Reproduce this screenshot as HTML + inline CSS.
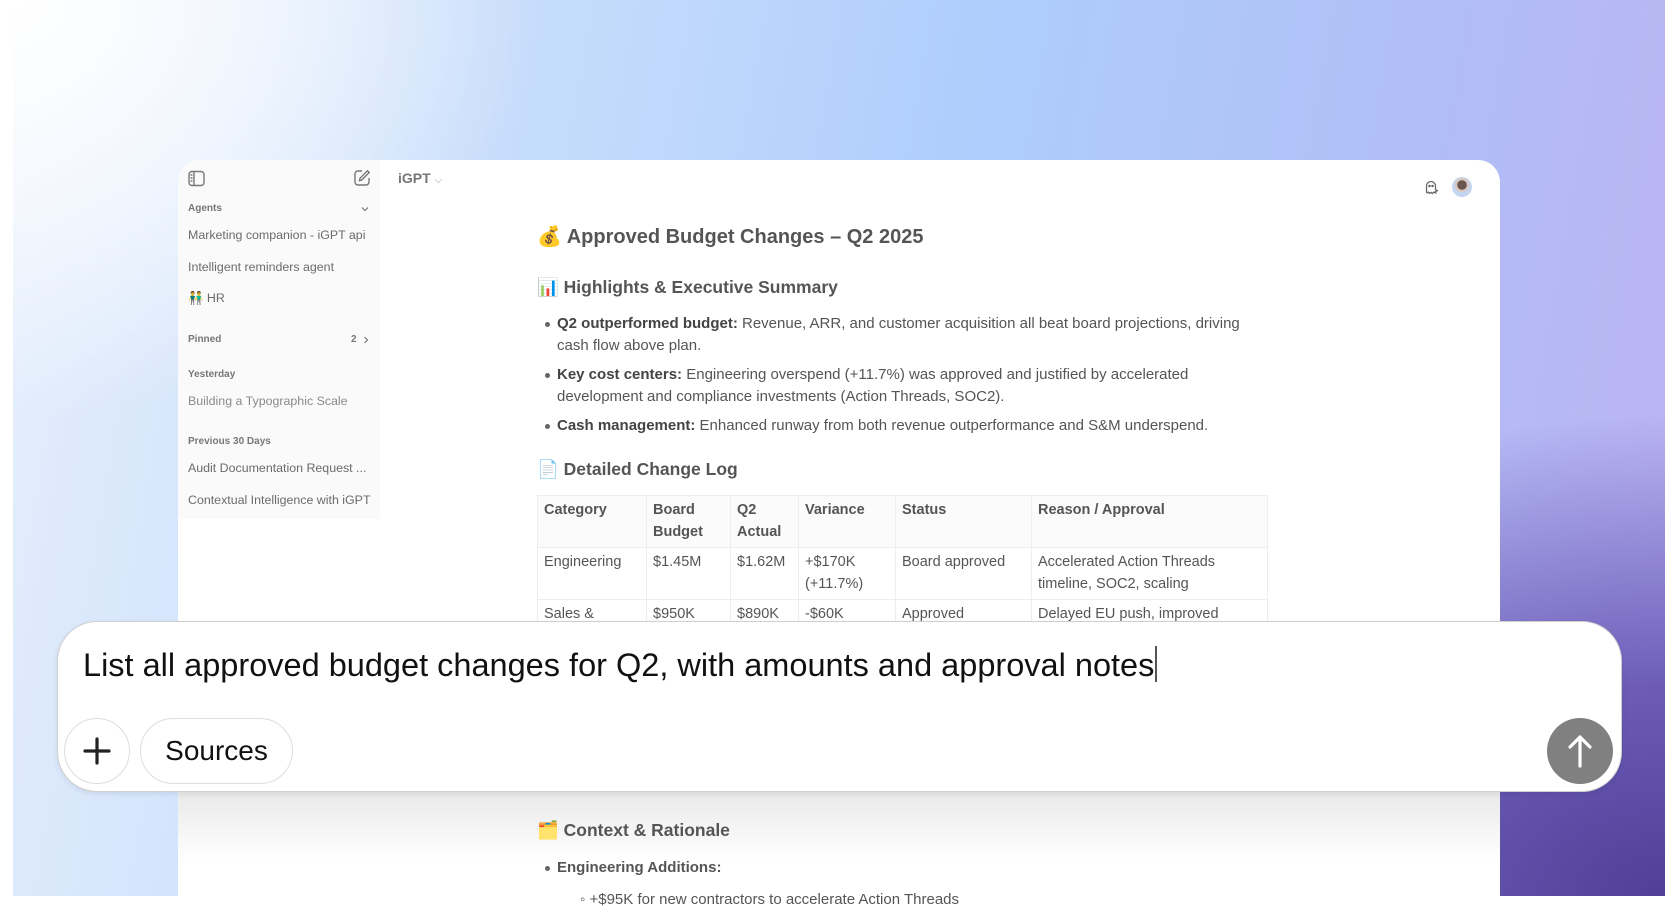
<!DOCTYPE html>
<html><head><meta charset="utf-8"><style>
*{margin:0;padding:0;box-sizing:border-box}
body{width:1678px;height:896px;overflow:hidden;background:#fff;font-family:"Liberation Sans",Arial,sans-serif;position:relative}
#bg{position:absolute;left:13px;top:0;width:1652px;height:896px;
background:
radial-gradient(ellipse 520px 420px at 0px 0px,rgba(255,255,255,1) 0%,rgba(255,255,255,0.6) 50%,rgba(255,255,255,0) 100%),
radial-gradient(ellipse 900px 600px at 1652px 896px,#4f3f95 0%,#6c5cb8 35%,rgba(150,140,225,0) 80%),
linear-gradient(100deg,#e6effc 0%,#c6dcfb 30%,#aecdfc 55%,#b1bdf7 80%,#bcb2f2 100%);}
#win{position:absolute;left:178px;top:160px;width:1322px;height:760px;background:#fff;border-radius:22px;overflow:hidden}
#side{position:absolute;left:0;top:0;width:202px;height:359px;background:#fafafa}
.s{position:absolute;left:10px;font-size:12.4px;color:#6b6b6b;white-space:nowrap}
.lab{position:absolute;left:10px;font-size:10px;font-weight:bold;color:#777}
.t{position:absolute;white-space:nowrap}
h1{font-size:20px;font-weight:bold;color:#555}
.h2{font-size:17.5px;font-weight:bold;color:#555}
.p{font-size:15px;color:#555;line-height:22px}
.p b{color:#444}
.dot{position:absolute;left:8px;width:5px;height:5px;border-radius:50%;background:#666}
table{position:absolute;left:537px;top:495px;width:731px;border-collapse:collapse;font-size:14.5px;color:#555;line-height:21.5px}
td,th{vertical-align:top;text-align:left;padding:4px 6px 4px 6px;border:1px solid #eee}
th{font-weight:bold;color:#555;background:#fbfbfb}
#fade{position:absolute;left:178px;top:792px;width:1322px;height:70px;background:linear-gradient(#e9e9e9,rgba(255,255,255,0))}
#inp{position:absolute;left:57px;top:621px;width:1565px;height:171px;background:#fff;border-radius:40px;border:1.5px solid #cfcfcf;box-shadow:0 2px 6px rgba(0,0,0,0.08)}
</style></head><body>
<div id="bg"></div>
<div id="win">
 <div id="side">
  <svg style="position:absolute;left:10px;top:10px" width="17" height="17" viewBox="0 0 17 17" fill="none" stroke="#777" stroke-width="1.4"><rect x="1" y="1.5" width="15" height="14" rx="3"/><line x1="6" y1="1.5" x2="6" y2="15.5"/><line x1="2.5" y1="5" x2="4.5" y2="5"/><line x1="2.5" y1="8" x2="4.5" y2="8"/><line x1="2.5" y1="11" x2="4.5" y2="11"/></svg>
  <svg style="position:absolute;left:175px;top:9px" width="18" height="18" viewBox="0 0 18 18" fill="none" stroke="#777" stroke-width="1.4"><path d="M9 2H5a3 3 0 0 0-3 3v8a3 3 0 0 0 3 3h8a3 3 0 0 0 3-3V9"/><path d="M14.5 1.8l1.7 1.7-7.5 7.5-2.3.6.6-2.3z"/></svg>
  <div class="lab" style="top:43px">Agents</div>
  <svg style="position:absolute;left:183px;top:46px" width="8" height="6" viewBox="0 0 8 6" fill="none" stroke="#777" stroke-width="1.2"><path d="M1 1.5l3 3 3-3"/></svg>
  <div class="s" style="top:68px">Marketing companion - iGPT api</div>
  <div class="s" style="top:100px">Intelligent reminders agent</div>
  <div class="s" style="top:131px">👬 HR</div>
  <div class="lab" style="top:174px">Pinned</div>
  <div class="lab" style="top:174px;left:173px">2</div>
  <svg style="position:absolute;left:185px;top:176px" width="6" height="8" viewBox="0 0 6 8" fill="none" stroke="#777" stroke-width="1.2"><path d="M1.5 1l3 3-3 3"/></svg>
  <div class="lab" style="top:209px">Yesterday</div>
  <div class="s" style="top:234px;color:#8a8a8a">Building a Typographic Scale</div>
  <div class="lab" style="top:276px">Previous 30 Days</div>
  <div class="s" style="top:301px">Audit Documentation Request ...</div>
  <div class="s" style="top:333px">Contextual Intelligence with iGPT</div>
 </div>
 <div class="t" style="left:220px;top:10px;font-size:14px;font-weight:bold;color:#777">iGPT <span style="font-weight:normal;font-size:10px;color:#999">⌵</span></div>
 <svg style="position:absolute;left:1245px;top:19px" width="16" height="16" viewBox="0 0 16 16" fill="none" stroke="#666" stroke-width="1.3"><path d="M3.5 13V7a4.5 4.5 0 0 1 9 0v3.5l1.8 1.2-1.8.8.3 1.5-2-.8-1.3 1.3-1.3-1.1-1.5 1-1-1.2-1.7.6z"/><circle cx="6.5" cy="7" r=".6" fill="#666"/><circle cx="9.5" cy="7" r=".6" fill="#666"/></svg>
 <div style="position:absolute;left:1274px;top:17px;width:20px;height:20px;border-radius:50%;background:radial-gradient(circle at 50% 40%,#6a5850 0 30%,#d8c8c0 31% 45%,#c4d6ef 46%)"></div>
 <div class="t" style="left:359px;top:64px"><h1>💰 Approved Budget Changes – Q2 2025</h1></div>
 <div class="t h2" style="left:359px;top:117px">📊 Highlights &amp; Executive Summary</div>
 <div style="position:absolute;left:359px;top:153px;width:720px">
  <div class="dot" style="top:9px"></div>
  <div class="p" style="position:absolute;left:20px;top:0;width:710px"><b>Q2 outperformed budget:</b> Revenue, ARR, and customer acquisition all beat board projections, driving cash flow above plan.</div>
  <div class="dot" style="top:60px"></div>
  <div class="p" style="position:absolute;left:20px;top:51px;width:700px"><b>Key cost centers:</b> Engineering overspend (+11.7%) was approved and justified by accelerated development and compliance investments (Action Threads, SOC2).</div>
  <div class="dot" style="top:111px"></div>
  <div class="p" style="position:absolute;left:20px;top:102px;width:720px"><b>Cash management:</b> Enhanced runway from both revenue outperformance and S&amp;M underspend.</div>
 </div>
 <div class="t h2" style="left:359px;top:299px">📄 Detailed Change Log</div>
</div>
<table>
<tr><th style="width:109px">Category</th><th style="width:84px">Board Budget</th><th style="width:68px">Q2 Actual</th><th style="width:97px">Variance</th><th style="width:136px">Status</th><th>Reason / Approval</th></tr>
<tr><td>Engineering</td><td>$1.45M</td><td>$1.62M</td><td>+$170K (+11.7%)</td><td>Board approved</td><td>Accelerated Action Threads timeline, SOC2, scaling</td></tr>
<tr><td>Sales &amp; Marketing</td><td>$950K</td><td>$890K</td><td>-$60K</td><td>Approved</td><td>Delayed EU push, improved efficiency</td></tr>
</table>
<div id="fade"></div>
<div class="t h2" style="left:537px;top:820px;color:#555">🗂️ Context &amp; Rationale</div>
<div class="dot" style="left:545px;top:866px"></div>
<div class="t p" style="left:557px;top:857px;font-weight:bold">Engineering Additions:</div>
<div class="t p" style="left:580px;top:889px">◦ +$95K for new contractors to accelerate Action Threads</div>
<div id="inp">
 <div class="t" style="left:25px;top:24px;font-size:32.5px;color:#111">List all approved budget changes for Q2, with amounts and approval notes<span style="display:inline-block;width:1.5px;height:36px;background:#555;vertical-align:-6px;margin-left:1px"></span></div>
 <div style="position:absolute;left:6px;top:96px;width:66px;height:66px;border-radius:50%;border:1.5px solid #ddd;background:#fff"></div>
 <svg style="position:absolute;left:24px;top:114px" width="30" height="30" viewBox="0 0 30 30" stroke="#222" stroke-width="3.2" stroke-linecap="round"><line x1="15" y1="3" x2="15" y2="27"/><line x1="3" y1="15" x2="27" y2="15"/></svg>
 <div style="position:absolute;left:82px;top:96px;width:153px;height:66px;border-radius:33px;border:1.5px solid #ddd;background:#fff;font-size:28px;color:#111;text-align:center;line-height:63px">Sources</div>
 <div style="position:absolute;left:1489px;top:96px;width:66px;height:66px;border-radius:50%;background:#808080"></div>
 <svg style="position:absolute;left:1509px;top:111px" width="26" height="36" viewBox="0 0 26 36" fill="none" stroke="#fff" stroke-width="3.2" stroke-linecap="round" stroke-linejoin="round"><path d="M13 33V4M3 14L13 4l10 10"/></svg>
</div>
</body></html>
